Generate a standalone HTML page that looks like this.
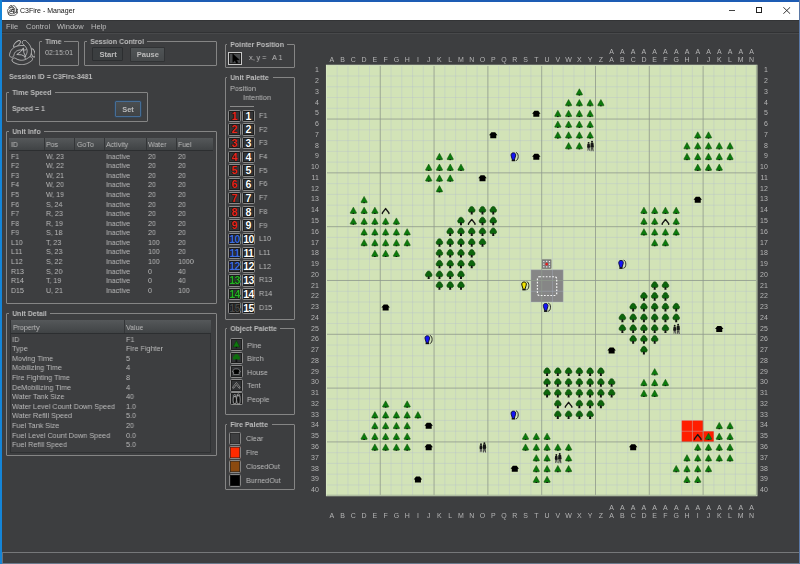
<!DOCTYPE html>
<html><head><meta charset="utf-8">
<style>
html,body{margin:0;padding:0;}
body{width:800px;height:564px;overflow:hidden;position:relative;background:#3d3e40;font-family:"Liberation Sans", sans-serif;color:#bbbbbb;}
.abs{position:absolute}
.box{position:absolute;border:1px solid #858585;border-radius:1px;box-sizing:border-box;}
.btitle{position:absolute;background:#3d3e40;padding:0 3.6px 0 3.4px;font-weight:bold;font-size:7.55px;line-height:9px;color:#bcbcbc;white-space:nowrap;transform:scaleX(0.93);transform-origin:0 0}
.t{position:absolute;font-size:7.6px;line-height:8.5px;white-space:nowrap;color:#bbbbbb;transform:scaleX(0.921);transform-origin:0 0}
.b{font-weight:bold}
.thead{position:absolute;box-sizing:border-box;background:linear-gradient(#55585a,#404345);border-bottom:1px solid #2c2e30}
.tsep{position:absolute;width:1px;background:#343638}
.tframe{position:absolute;border:1px solid #2f3133;box-sizing:border-box}
.ucell{position:absolute;width:12.8px;height:12.5px;box-sizing:border-box;border:1px solid #8a8a8a;border-radius:1.5px;box-shadow:inset 0 0 0 1px #1d1d1d;background:#333537;font-weight:bold;font-size:10.6px;line-height:10.6px;text-align:center;text-shadow:0 0 1px #000,0 0 0.6px #000,0 0 0.6px #000}
.ocell{position:absolute;width:12.8px;height:12.7px;box-sizing:border-box;border:1px solid #8a8a8a;border-radius:1.5px;box-shadow:inset 0 0 0 1px #1d1d1d;background:#303234}
.fcell{position:absolute;width:12.8px;height:12.4px;box-sizing:border-box;border:1px solid #858585;border-radius:1.5px;box-shadow:inset 0 0 0 0.6px #222}
.btn{position:absolute;box-sizing:border-box;border-radius:1px;font-weight:bold;font-size:7px;text-align:center;color:#bbbbbb}
.t,.btitle,.abs,.btn,svg{will-change:transform}
</style></head><body>
<!-- window frame -->
<div class="abs" style="left:0;top:0;width:800px;height:2px;background:#1d5cb4"></div>
<div class="abs" style="left:0;top:0;width:2px;height:564px;background:#1485d8"></div>
<div class="abs" style="left:799px;top:0;width:1px;height:564px;background:#5a78a6"></div>
<div class="abs" style="left:2px;top:2px;width:797px;height:18px;background:#ffffff"></div>
<svg class="abs" style="left:6.5px;top:4.5px" width="11" height="11" viewBox="-13 -13 26 26"><ellipse cx="-5.00" cy="-8.60" rx="4.30" ry="1.95" transform="rotate(-45 -5.00 -8.60)" fill="#fff" stroke="#111" stroke-width="1.7"/><ellipse cx="11.00" cy="0.40" rx="4.30" ry="1.85" transform="rotate(72 11.00 0.40)" fill="#fff" stroke="#111" stroke-width="1.7"/><ellipse cx="-5.60" cy="8.80" rx="4.30" ry="1.95" transform="rotate(22 -5.60 8.80)" fill="#fff" stroke="#111" stroke-width="1.7"/><path d="M-8.11,2.92 L-8.00,2.37 L-7.87,1.85 L-7.71,1.38 L-7.53,0.95 L-7.33,0.55 L-7.11,0.18 L-6.86,-0.16 L-6.60,-0.47 L-6.31,-0.76 L-5.99,-1.03 L-5.64,-1.28 L-5.26,-1.51 L-4.84,-1.72 L-4.38,-1.91 L-3.89,-2.08 L-3.35,-2.23 L-2.76,-2.36 L-2.14,-2.46 L-1.47,-2.53 L-0.75,-2.58 L0.00,-2.59 L0.80,-2.58 L1.64,-2.54 L2.53,-2.46 L3.10,-2.48 L3.65,-2.65 L4.14,-2.95 L4.53,-3.37 L4.80,-3.87 L4.93,-4.43 L4.92,-5.01 L4.75,-5.56 L4.45,-6.04 L4.03,-6.44 L3.52,-6.71 L2.96,-6.84 L1.94,-6.93 L0.95,-6.98 L-0.01,-6.99 L-0.94,-6.97 L-1.85,-6.91 L-2.72,-6.82 L-3.57,-6.68 L-4.39,-6.50 L-5.19,-6.28 L-5.95,-6.02 L-6.69,-5.71 L-7.39,-5.35 L-8.06,-4.95 L-8.69,-4.50 L-9.28,-4.00 L-9.83,-3.46 L-10.33,-2.87 L-10.78,-2.24 L-11.18,-1.58 L-11.53,-0.88 L-11.83,-0.15 L-12.08,0.60 L-12.29,1.39 L-12.45,2.20 L-12.47,2.77 L-12.34,3.33 L-12.07,3.84 L-11.68,4.26 L-11.19,4.56 L-10.64,4.73 L-10.07,4.75 L-9.51,4.62 L-9.00,4.35 L-8.58,3.96 L-8.28,3.47 Z" fill="#fff" stroke="#111" stroke-width="1.7"/><path d="M1.08,-8.33 L1.67,-7.80 L2.21,-7.28 L2.70,-6.76 L3.14,-6.25 L3.54,-5.75 L3.88,-5.25 L4.18,-4.76 L4.44,-4.28 L4.65,-3.80 L4.82,-3.34 L4.96,-2.88 L5.05,-2.42 L5.11,-1.96 L5.14,-1.50 L5.13,-1.04 L5.09,-0.57 L5.00,-0.10 L4.88,0.39 L4.73,0.90 L4.52,1.41 L4.28,1.94 L3.99,2.49 L3.66,3.04 L3.27,3.62 L3.01,4.12 L2.88,4.68 L2.90,5.26 L3.07,5.81 L3.38,6.29 L3.80,6.68 L4.31,6.95 L4.87,7.07 L5.44,7.05 L5.99,6.88 L6.48,6.57 L6.87,6.15 L7.37,5.41 L7.82,4.66 L8.22,3.90 L8.57,3.13 L8.87,2.36 L9.12,1.58 L9.31,0.80 L9.45,0.01 L9.52,-0.79 L9.54,-1.58 L9.49,-2.38 L9.39,-3.16 L9.22,-3.94 L9.00,-4.71 L8.72,-5.47 L8.39,-6.21 L8.00,-6.94 L7.57,-7.66 L7.08,-8.36 L6.54,-9.04 L5.96,-9.72 L5.33,-10.38 L4.66,-11.03 L3.94,-11.67 L3.46,-11.98 L2.92,-12.16 L2.34,-12.19 L1.78,-12.08 L1.27,-11.82 L0.84,-11.43 L0.53,-10.95 L0.35,-10.40 L0.32,-9.83 L0.44,-9.27 L0.70,-8.76 Z" fill="#fff" stroke="#111" stroke-width="1.7"/><path d="M6.96,4.79 L6.37,5.24 L5.78,5.65 L5.20,6.03 L4.62,6.36 L4.05,6.66 L3.49,6.92 L2.93,7.14 L2.38,7.33 L1.83,7.48 L1.28,7.61 L0.74,7.69 L0.20,7.75 L-0.34,7.77 L-0.88,7.76 L-1.42,7.72 L-1.97,7.65 L-2.52,7.54 L-3.07,7.40 L-3.63,7.23 L-4.20,7.02 L-4.78,6.77 L-5.36,6.49 L-5.95,6.17 L-6.55,5.81 L-7.07,5.57 L-7.64,5.48 L-8.21,5.53 L-8.75,5.73 L-9.22,6.06 L-9.58,6.50 L-9.82,7.03 L-9.92,7.59 L-9.87,8.16 L-9.67,8.70 L-9.33,9.17 L-8.89,9.54 L-8.13,9.99 L-7.37,10.41 L-6.60,10.78 L-5.83,11.11 L-5.05,11.40 L-4.26,11.64 L-3.47,11.84 L-2.68,11.99 L-1.88,12.10 L-1.08,12.16 L-0.28,12.17 L0.52,12.14 L1.32,12.05 L2.11,11.93 L2.90,11.75 L3.68,11.53 L4.46,11.27 L5.23,10.96 L5.99,10.61 L6.75,10.21 L7.49,9.78 L8.23,9.30 L8.97,8.79 L9.69,8.23 L10.09,7.82 L10.37,7.32 L10.51,6.76 L10.50,6.19 L10.34,5.64 L10.05,5.14 L9.64,4.74 L9.13,4.47 L8.58,4.33 L8.00,4.34 L7.45,4.49 Z" fill="#fff" stroke="#111" stroke-width="1.7"/><path d="M1.40,-4.62 Q1.04,0.20 3.82,4.42 Q-0.28,1.52 -5.22,2.00 Q-0.76,-0.28 1.40,-4.62 Z" fill="none" stroke="#111" stroke-width="1.7"/></svg>
<div class="abs" style="left:19.5px;top:6px;font-size:7px;line-height:9px;color:#111">C3Fire - Manager</div>
<div class="abs" style="left:728.5px;top:10px;width:6.3px;height:0.8px;background:#444"></div>
<div class="abs" style="left:755.5px;top:7.2px;width:6.3px;height:6.3px;border:0.9px solid #222;box-sizing:border-box"></div>
<svg class="abs" style="left:782.5px;top:7px" width="7.5" height="7" viewBox="0 0 7.5 7"><path d="M0.3,0.2 L7.2,6.8 M7.2,0.2 L0.3,6.8" stroke="#222" stroke-width="0.9"/></svg>
<!-- menu -->
<div class="abs" style="left:2px;top:20px;width:797px;height:13px;background:#3d3e40"></div>
<div class="abs" style="left:2px;top:20px;width:797px;height:1px;background:#333436"></div><div class="abs" style="left:2px;top:32px;width:797px;height:1px;background:#313234"></div><div class="abs" style="left:2px;top:33px;width:797px;height:1px;background:#48494b"></div>
<div class="abs" style="left:5.6px;top:21.6px;font-size:7.5px;line-height:9px;color:#bbbbbb">File</div>
<div class="abs" style="left:25.5px;top:21.6px;font-size:7.5px;line-height:9px;color:#bbbbbb">Control</div>
<div class="abs" style="left:57.4px;top:21.6px;font-size:7.5px;line-height:9px;color:#bbbbbb">Window</div>
<div class="abs" style="left:91px;top:21.6px;font-size:7.5px;line-height:9px;color:#bbbbbb">Help</div>
<!-- logo -->
<svg class="abs" style="left:9px;top:40px" width="26" height="25" viewBox="-13 -12.5 26 25"><ellipse cx="-5.00" cy="-8.60" rx="4.30" ry="1.95" transform="rotate(-45 -5.00 -8.60)" fill="#3d3e40" stroke="#b8b8b8" stroke-width="0.95"/><ellipse cx="11.00" cy="0.40" rx="4.30" ry="1.85" transform="rotate(72 11.00 0.40)" fill="#3d3e40" stroke="#b8b8b8" stroke-width="0.95"/><ellipse cx="-5.60" cy="8.80" rx="4.30" ry="1.95" transform="rotate(22 -5.60 8.80)" fill="#3d3e40" stroke="#b8b8b8" stroke-width="0.95"/><path d="M-8.11,2.92 L-8.00,2.37 L-7.87,1.85 L-7.71,1.38 L-7.53,0.95 L-7.33,0.55 L-7.11,0.18 L-6.86,-0.16 L-6.60,-0.47 L-6.31,-0.76 L-5.99,-1.03 L-5.64,-1.28 L-5.26,-1.51 L-4.84,-1.72 L-4.38,-1.91 L-3.89,-2.08 L-3.35,-2.23 L-2.76,-2.36 L-2.14,-2.46 L-1.47,-2.53 L-0.75,-2.58 L0.00,-2.59 L0.80,-2.58 L1.64,-2.54 L2.53,-2.46 L3.10,-2.48 L3.65,-2.65 L4.14,-2.95 L4.53,-3.37 L4.80,-3.87 L4.93,-4.43 L4.92,-5.01 L4.75,-5.56 L4.45,-6.04 L4.03,-6.44 L3.52,-6.71 L2.96,-6.84 L1.94,-6.93 L0.95,-6.98 L-0.01,-6.99 L-0.94,-6.97 L-1.85,-6.91 L-2.72,-6.82 L-3.57,-6.68 L-4.39,-6.50 L-5.19,-6.28 L-5.95,-6.02 L-6.69,-5.71 L-7.39,-5.35 L-8.06,-4.95 L-8.69,-4.50 L-9.28,-4.00 L-9.83,-3.46 L-10.33,-2.87 L-10.78,-2.24 L-11.18,-1.58 L-11.53,-0.88 L-11.83,-0.15 L-12.08,0.60 L-12.29,1.39 L-12.45,2.20 L-12.47,2.77 L-12.34,3.33 L-12.07,3.84 L-11.68,4.26 L-11.19,4.56 L-10.64,4.73 L-10.07,4.75 L-9.51,4.62 L-9.00,4.35 L-8.58,3.96 L-8.28,3.47 Z" fill="#3d3e40" stroke="#b8b8b8" stroke-width="0.95"/><path d="M1.08,-8.33 L1.67,-7.80 L2.21,-7.28 L2.70,-6.76 L3.14,-6.25 L3.54,-5.75 L3.88,-5.25 L4.18,-4.76 L4.44,-4.28 L4.65,-3.80 L4.82,-3.34 L4.96,-2.88 L5.05,-2.42 L5.11,-1.96 L5.14,-1.50 L5.13,-1.04 L5.09,-0.57 L5.00,-0.10 L4.88,0.39 L4.73,0.90 L4.52,1.41 L4.28,1.94 L3.99,2.49 L3.66,3.04 L3.27,3.62 L3.01,4.12 L2.88,4.68 L2.90,5.26 L3.07,5.81 L3.38,6.29 L3.80,6.68 L4.31,6.95 L4.87,7.07 L5.44,7.05 L5.99,6.88 L6.48,6.57 L6.87,6.15 L7.37,5.41 L7.82,4.66 L8.22,3.90 L8.57,3.13 L8.87,2.36 L9.12,1.58 L9.31,0.80 L9.45,0.01 L9.52,-0.79 L9.54,-1.58 L9.49,-2.38 L9.39,-3.16 L9.22,-3.94 L9.00,-4.71 L8.72,-5.47 L8.39,-6.21 L8.00,-6.94 L7.57,-7.66 L7.08,-8.36 L6.54,-9.04 L5.96,-9.72 L5.33,-10.38 L4.66,-11.03 L3.94,-11.67 L3.46,-11.98 L2.92,-12.16 L2.34,-12.19 L1.78,-12.08 L1.27,-11.82 L0.84,-11.43 L0.53,-10.95 L0.35,-10.40 L0.32,-9.83 L0.44,-9.27 L0.70,-8.76 Z" fill="#3d3e40" stroke="#b8b8b8" stroke-width="0.95"/><path d="M6.96,4.79 L6.37,5.24 L5.78,5.65 L5.20,6.03 L4.62,6.36 L4.05,6.66 L3.49,6.92 L2.93,7.14 L2.38,7.33 L1.83,7.48 L1.28,7.61 L0.74,7.69 L0.20,7.75 L-0.34,7.77 L-0.88,7.76 L-1.42,7.72 L-1.97,7.65 L-2.52,7.54 L-3.07,7.40 L-3.63,7.23 L-4.20,7.02 L-4.78,6.77 L-5.36,6.49 L-5.95,6.17 L-6.55,5.81 L-7.07,5.57 L-7.64,5.48 L-8.21,5.53 L-8.75,5.73 L-9.22,6.06 L-9.58,6.50 L-9.82,7.03 L-9.92,7.59 L-9.87,8.16 L-9.67,8.70 L-9.33,9.17 L-8.89,9.54 L-8.13,9.99 L-7.37,10.41 L-6.60,10.78 L-5.83,11.11 L-5.05,11.40 L-4.26,11.64 L-3.47,11.84 L-2.68,11.99 L-1.88,12.10 L-1.08,12.16 L-0.28,12.17 L0.52,12.14 L1.32,12.05 L2.11,11.93 L2.90,11.75 L3.68,11.53 L4.46,11.27 L5.23,10.96 L5.99,10.61 L6.75,10.21 L7.49,9.78 L8.23,9.30 L8.97,8.79 L9.69,8.23 L10.09,7.82 L10.37,7.32 L10.51,6.76 L10.50,6.19 L10.34,5.64 L10.05,5.14 L9.64,4.74 L9.13,4.47 L8.58,4.33 L8.00,4.34 L7.45,4.49 Z" fill="#3d3e40" stroke="#b8b8b8" stroke-width="0.95"/><path d="M1.40,-4.62 Q1.04,0.20 3.82,4.42 Q-0.28,1.52 -5.22,2.00 Q-0.76,-0.28 1.40,-4.62 Z" fill="none" stroke="#b8b8b8" stroke-width="0.95"/></svg>
<!-- time -->
<div class="box" style="left:39.00px;top:41.00px;width:40.10px;height:25.10px"></div><div class="btitle" style="left:42.24px;top:37.00px">Time</div>
<div class="t" style="left:45px;top:49.4px;font-size:7.81px">02:15:01</div>
<div class="box" style="left:84.00px;top:41.00px;width:133.40px;height:25.10px"></div><div class="btitle" style="left:87.34px;top:37.00px">Session Control</div>
<div class="btn" style="left:92px;top:47.2px;width:30.8px;height:14.4px;border:1px solid #2c2e30;background:#3b3e40;line-height:14.4px;font-size:7.6px;text-indent:1.5px">Start</div>
<div class="btn" style="left:130px;top:47px;width:35.2px;height:14.9px;border:1px solid #313335;background:linear-gradient(#505456,#46494b);line-height:14px;font-size:7.6px;text-indent:0.5px">Pause</div>
<div class="t b" style="left:9px;top:72.5px">Session ID = C3Fire-3481</div>
<div class="box" style="left:6.10px;top:91.90px;width:142.00px;height:30.20px"></div><div class="btitle" style="left:8.84px;top:87.90px">Time Speed</div>
<div class="t b" style="left:12px;top:105.2px">Speed = 1</div>
<div class="btn" style="left:115.4px;top:101px;width:26.2px;height:16px;border:1px solid #466d96;background:linear-gradient(#4a4e50,#404345);line-height:15px;font-size:7.4px;box-shadow:0 0 0 0.6px #2d4a66">Set</div>
<div class="box" style="left:5.50px;top:130.50px;width:211.00px;height:173.50px"></div><div class="btitle" style="left:8.84px;top:126.50px">Unit Info</div>
<div class="thead" style="left:9px;top:137.5px;width:204px;height:13.8px"></div>
<div class="tsep" style="left:44px;top:137.5px;height:12.8px"></div>
<div class="tsep" style="left:73.7px;top:137.5px;height:12.8px"></div>
<div class="tsep" style="left:104px;top:137.5px;height:12.8px"></div>
<div class="tsep" style="left:145.8px;top:137.5px;height:12.8px"></div>
<div class="tsep" style="left:176px;top:137.5px;height:12.8px"></div>
<div class="t" style="left:11px;top:141px">ID</div>
<div class="t" style="left:46.2px;top:141px">Pos</div>
<div class="t" style="left:76.5px;top:141px">GoTo</div>
<div class="t" style="left:106px;top:141px">Activity</div>
<div class="t" style="left:148px;top:141px">Water</div>
<div class="t" style="left:178px;top:141px">Fuel</div>
<div class="t" style="left:11px;top:152.80px">F1</div>
<div class="t" style="left:46.2px;top:152.80px">W, 23</div>
<div class="t" style="left:106px;top:152.80px">Inactive</div>
<div class="t" style="left:148px;top:152.80px">20</div>
<div class="t" style="left:178px;top:152.80px">20</div>
<div class="t" style="left:11px;top:162.36px">F2</div>
<div class="t" style="left:46.2px;top:162.36px">W, 22</div>
<div class="t" style="left:106px;top:162.36px">Inactive</div>
<div class="t" style="left:148px;top:162.36px">20</div>
<div class="t" style="left:178px;top:162.36px">20</div>
<div class="t" style="left:11px;top:171.92px">F3</div>
<div class="t" style="left:46.2px;top:171.92px">W, 21</div>
<div class="t" style="left:106px;top:171.92px">Inactive</div>
<div class="t" style="left:148px;top:171.92px">20</div>
<div class="t" style="left:178px;top:171.92px">20</div>
<div class="t" style="left:11px;top:181.48px">F4</div>
<div class="t" style="left:46.2px;top:181.48px">W, 20</div>
<div class="t" style="left:106px;top:181.48px">Inactive</div>
<div class="t" style="left:148px;top:181.48px">20</div>
<div class="t" style="left:178px;top:181.48px">20</div>
<div class="t" style="left:11px;top:191.04px">F5</div>
<div class="t" style="left:46.2px;top:191.04px">W, 19</div>
<div class="t" style="left:106px;top:191.04px">Inactive</div>
<div class="t" style="left:148px;top:191.04px">20</div>
<div class="t" style="left:178px;top:191.04px">20</div>
<div class="t" style="left:11px;top:200.60px">F6</div>
<div class="t" style="left:46.2px;top:200.60px">S, 24</div>
<div class="t" style="left:106px;top:200.60px">Inactive</div>
<div class="t" style="left:148px;top:200.60px">20</div>
<div class="t" style="left:178px;top:200.60px">20</div>
<div class="t" style="left:11px;top:210.16px">F7</div>
<div class="t" style="left:46.2px;top:210.16px">R, 23</div>
<div class="t" style="left:106px;top:210.16px">Inactive</div>
<div class="t" style="left:148px;top:210.16px">20</div>
<div class="t" style="left:178px;top:210.16px">20</div>
<div class="t" style="left:11px;top:219.72px">F8</div>
<div class="t" style="left:46.2px;top:219.72px">R, 19</div>
<div class="t" style="left:106px;top:219.72px">Inactive</div>
<div class="t" style="left:148px;top:219.72px">20</div>
<div class="t" style="left:178px;top:219.72px">20</div>
<div class="t" style="left:11px;top:229.28px">F9</div>
<div class="t" style="left:46.2px;top:229.28px">S, 18</div>
<div class="t" style="left:106px;top:229.28px">Inactive</div>
<div class="t" style="left:148px;top:229.28px">20</div>
<div class="t" style="left:178px;top:229.28px">20</div>
<div class="t" style="left:11px;top:238.84px">L10</div>
<div class="t" style="left:46.2px;top:238.84px">T, 23</div>
<div class="t" style="left:106px;top:238.84px">Inactive</div>
<div class="t" style="left:148px;top:238.84px">100</div>
<div class="t" style="left:178px;top:238.84px">20</div>
<div class="t" style="left:11px;top:248.40px">L11</div>
<div class="t" style="left:46.2px;top:248.40px">S, 23</div>
<div class="t" style="left:106px;top:248.40px">Inactive</div>
<div class="t" style="left:148px;top:248.40px">100</div>
<div class="t" style="left:178px;top:248.40px">20</div>
<div class="t" style="left:11px;top:257.96px">L12</div>
<div class="t" style="left:46.2px;top:257.96px">S, 22</div>
<div class="t" style="left:106px;top:257.96px">Inactive</div>
<div class="t" style="left:148px;top:257.96px">100</div>
<div class="t" style="left:178px;top:257.96px">1000</div>
<div class="t" style="left:11px;top:267.52px">R13</div>
<div class="t" style="left:46.2px;top:267.52px">S, 20</div>
<div class="t" style="left:106px;top:267.52px">Inactive</div>
<div class="t" style="left:148px;top:267.52px">0</div>
<div class="t" style="left:178px;top:267.52px">40</div>
<div class="t" style="left:11px;top:277.08px">R14</div>
<div class="t" style="left:46.2px;top:277.08px">T, 19</div>
<div class="t" style="left:106px;top:277.08px">Inactive</div>
<div class="t" style="left:148px;top:277.08px">0</div>
<div class="t" style="left:178px;top:277.08px">40</div>
<div class="t" style="left:11px;top:286.64px">D15</div>
<div class="t" style="left:46.2px;top:286.64px">U, 21</div>
<div class="t" style="left:106px;top:286.64px">Inactive</div>
<div class="t" style="left:148px;top:286.64px">0</div>
<div class="t" style="left:178px;top:286.64px">100</div>
<div class="box" style="left:6.00px;top:312.80px;width:211.00px;height:143.70px"></div><div class="btitle" style="left:8.84px;top:308.80px">Unit Detail</div>
<div class="tframe" style="left:10px;top:319.5px;width:201px;height:133px"></div>
<div class="thead" style="left:11px;top:320px;width:200px;height:14px"></div>
<div class="tsep" style="left:124.2px;top:320px;height:13px"></div>
<div class="t" style="left:12.7px;top:323.8px">Property</div>
<div class="t" style="left:126px;top:323.8px">Value</div>
<div class="t" style="left:11.8px;top:335.60px;font-size:7.87px">ID</div>
<div class="t" style="left:126px;top:335.60px;font-size:7.87px">F1</div>
<div class="t" style="left:11.8px;top:345.19px;font-size:7.87px">Type</div>
<div class="t" style="left:126px;top:345.19px;font-size:7.87px">Fire Fighter</div>
<div class="t" style="left:11.8px;top:354.78px;font-size:7.87px">Moving Time</div>
<div class="t" style="left:126px;top:354.78px;font-size:7.87px">5</div>
<div class="t" style="left:11.8px;top:364.37px;font-size:7.87px">Mobilizing Time</div>
<div class="t" style="left:126px;top:364.37px;font-size:7.87px">4</div>
<div class="t" style="left:11.8px;top:373.96px;font-size:7.87px">Fire Fighting Time</div>
<div class="t" style="left:126px;top:373.96px;font-size:7.87px">8</div>
<div class="t" style="left:11.8px;top:383.55px;font-size:7.87px">DeMobilizing Time</div>
<div class="t" style="left:126px;top:383.55px;font-size:7.87px">4</div>
<div class="t" style="left:11.8px;top:393.14px;font-size:7.87px">Water Tank Size</div>
<div class="t" style="left:126px;top:393.14px;font-size:7.87px">40</div>
<div class="t" style="left:11.8px;top:402.73px;font-size:7.87px">Water Level Count Down Speed</div>
<div class="t" style="left:126px;top:402.73px;font-size:7.87px">1.0</div>
<div class="t" style="left:11.8px;top:412.32px;font-size:7.87px">Water Refill Speed</div>
<div class="t" style="left:126px;top:412.32px;font-size:7.87px">5.0</div>
<div class="t" style="left:11.8px;top:421.91px;font-size:7.87px">Fuel Tank Size</div>
<div class="t" style="left:126px;top:421.91px;font-size:7.87px">20</div>
<div class="t" style="left:11.8px;top:431.50px;font-size:7.87px">Fuel Level Count Down Speed</div>
<div class="t" style="left:126px;top:431.50px;font-size:7.87px">0.0</div>
<div class="t" style="left:11.8px;top:441.09px;font-size:7.87px">Fuel Refill Speed</div>
<div class="t" style="left:126px;top:441.09px;font-size:7.87px">5.0</div>
<div class="box" style="left:224.70px;top:44.10px;width:70.30px;height:24.40px"></div><div class="btitle" style="left:227.44px;top:40.10px">Pointer Position</div>
<div style="position:absolute;left:228px;top:51.5px;width:13.5px;height:13.5px;box-sizing:border-box;border:1px solid #c8c8c8;box-shadow:inset 0 0 0 1px #222;background:#4a4c4e"></div>
<svg style="position:absolute;left:231px;top:53px" width="10" height="11" viewBox="0 0 10 11"><path d="M1.8,1 L1.8,9.4 L3.9,7.5 L5.5,10.2 L6.9,9.5 L5.4,6.9 L8.3,6.8 Z" fill="#000" stroke="#000" stroke-width="0.5" stroke-linejoin="round"/></svg>
<div class="t" style="left:249px;top:54.2px;font-size:7.81px">x, y =</div><div class="t" style="left:271.6px;top:54.2px;font-size:7.81px">A 1</div>
<div class="box" style="left:224.70px;top:77.00px;width:70.30px;height:242.50px"></div><div class="btitle" style="left:227.44px;top:73.00px">Unit Palette</div>
<div class="t" style="left:230px;top:84.8px;font-size:7.92px">Position</div>
<div class="t" style="left:243.4px;top:93.7px;font-size:7.92px">Intention</div>
<div style="position:absolute;left:230px;top:105.5px;width:24px;height:1px;background:#8a8a8a"></div>
<div class="ucell" style="left:228.1px;top:109.50px;color:#e8281e;letter-spacing:0">1</div>
<div class="ucell" style="left:242px;top:109.50px;color:#fff;letter-spacing:0">1</div>
<div class="t" style="left:258.8px;top:111.80px;font-size:7.81px">F1</div>
<div class="ucell" style="left:228.1px;top:123.22px;color:#e8281e;letter-spacing:0">2</div>
<div class="ucell" style="left:242px;top:123.22px;color:#fff;letter-spacing:0">2</div>
<div class="t" style="left:258.8px;top:125.52px;font-size:7.81px">F2</div>
<div class="ucell" style="left:228.1px;top:136.94px;color:#e8281e;letter-spacing:0">3</div>
<div class="ucell" style="left:242px;top:136.94px;color:#fff;letter-spacing:0">3</div>
<div class="t" style="left:258.8px;top:139.24px;font-size:7.81px">F3</div>
<div class="ucell" style="left:228.1px;top:150.66px;color:#e8281e;letter-spacing:0">4</div>
<div class="ucell" style="left:242px;top:150.66px;color:#fff;letter-spacing:0">4</div>
<div class="t" style="left:258.8px;top:152.96px;font-size:7.81px">F4</div>
<div class="ucell" style="left:228.1px;top:164.38px;color:#e8281e;letter-spacing:0">5</div>
<div class="ucell" style="left:242px;top:164.38px;color:#fff;letter-spacing:0">5</div>
<div class="t" style="left:258.8px;top:166.68px;font-size:7.81px">F5</div>
<div class="ucell" style="left:228.1px;top:178.10px;color:#e8281e;letter-spacing:0">6</div>
<div class="ucell" style="left:242px;top:178.10px;color:#fff;letter-spacing:0">6</div>
<div class="t" style="left:258.8px;top:180.40px;font-size:7.81px">F6</div>
<div class="ucell" style="left:228.1px;top:191.82px;color:#e8281e;letter-spacing:0">7</div>
<div class="ucell" style="left:242px;top:191.82px;color:#fff;letter-spacing:0">7</div>
<div class="t" style="left:258.8px;top:194.12px;font-size:7.81px">F7</div>
<div class="ucell" style="left:228.1px;top:205.54px;color:#e8281e;letter-spacing:0">8</div>
<div class="ucell" style="left:242px;top:205.54px;color:#fff;letter-spacing:0">8</div>
<div class="t" style="left:258.8px;top:207.84px;font-size:7.81px">F8</div>
<div class="ucell" style="left:228.1px;top:219.26px;color:#e8281e;letter-spacing:0">9</div>
<div class="ucell" style="left:242px;top:219.26px;color:#fff;letter-spacing:0">9</div>
<div class="t" style="left:258.8px;top:221.56px;font-size:7.81px">F9</div>
<div class="ucell" style="left:228.1px;top:232.98px;color:#3f6fe0;letter-spacing:-0.7px">10</div>
<div class="ucell" style="left:242px;top:232.98px;color:#fff;letter-spacing:-0.7px">10</div>
<div class="t" style="left:258.8px;top:235.28px;font-size:7.81px">L10</div>
<div class="ucell" style="left:228.1px;top:246.70px;color:#3f6fe0;letter-spacing:-0.7px">11</div>
<div class="ucell" style="left:242px;top:246.70px;color:#fff;letter-spacing:-0.7px">11</div>
<div class="t" style="left:258.8px;top:249.00px;font-size:7.81px">L11</div>
<div class="ucell" style="left:228.1px;top:260.42px;color:#3f6fe0;letter-spacing:-0.7px">12</div>
<div class="ucell" style="left:242px;top:260.42px;color:#fff;letter-spacing:-0.7px">12</div>
<div class="t" style="left:258.8px;top:262.72px;font-size:7.81px">L12</div>
<div class="ucell" style="left:228.1px;top:274.14px;color:#26b326;letter-spacing:-0.7px">13</div>
<div class="ucell" style="left:242px;top:274.14px;color:#fff;letter-spacing:-0.7px">13</div>
<div class="t" style="left:258.8px;top:276.44px;font-size:7.81px">R13</div>
<div class="ucell" style="left:228.1px;top:287.86px;color:#26b326;letter-spacing:-0.7px">14</div>
<div class="ucell" style="left:242px;top:287.86px;color:#fff;letter-spacing:-0.7px">14</div>
<div class="t" style="left:258.8px;top:290.16px;font-size:7.81px">R14</div>
<div class="ucell" style="left:228.1px;top:301.58px;color:#4a4a4a;letter-spacing:-0.7px">15</div>
<div class="ucell" style="left:242px;top:301.58px;color:#fff;letter-spacing:-0.7px">15</div>
<div class="t" style="left:258.8px;top:303.88px;font-size:7.81px">D15</div>
<div class="box" style="left:224.90px;top:328.10px;width:70.00px;height:87.20px"></div><div class="btitle" style="left:227.34px;top:324.10px">Object Palette</div>
<div class="ocell" style="left:230px;top:338.00px"></div>
<div class="t" style="left:247.1px;top:341.50px;font-size:7.81px">Pine</div>
<div class="ocell" style="left:230px;top:351.62px"></div>
<div class="t" style="left:247.1px;top:355.12px;font-size:7.81px">Birch</div>
<div class="ocell" style="left:230px;top:365.24px"></div>
<div class="t" style="left:247.1px;top:368.74px;font-size:7.81px">House</div>
<div class="ocell" style="left:230px;top:378.86px"></div>
<div class="t" style="left:247.1px;top:382.36px;font-size:7.81px">Tent</div>
<div class="ocell" style="left:230px;top:392.48px"></div>
<div class="t" style="left:247.1px;top:395.98px;font-size:7.81px">People</div>
<div class="box" style="left:224.90px;top:423.90px;width:70.00px;height:66.40px"></div><div class="btitle" style="left:227.34px;top:419.90px">Fire Palette</div>
<div class="fcell" style="left:228.6px;top:432.40px;background:#3d3e40"></div>
<div class="t" style="left:245.5px;top:434.70px;font-size:7.81px">Clear</div>
<div class="fcell" style="left:228.6px;top:446.35px;background:#ff2a00"></div>
<div class="t" style="left:245.5px;top:448.65px;font-size:7.81px">Fire</div>
<div class="fcell" style="left:228.6px;top:460.30px;background:#8b4a10"></div>
<div class="t" style="left:245.5px;top:462.60px;font-size:7.81px">ClosedOut</div>
<div class="fcell" style="left:228.6px;top:474.25px;background:#000000"></div>
<div class="t" style="left:245.5px;top:476.55px;font-size:7.81px">BurnedOut</div><svg style="position:absolute;left:0;top:0" width="800" height="564" viewBox="0 0 800 564">
<g transform="translate(236.4,344.35)"><path d="M0,-3.8 L-3.3,2.6 L3.3,2.6 Z" fill="#0e7a0e" stroke="#0a3a0a" stroke-width="0.6"/><rect x="-0.7" y="2.5" width="1.4" height="1.3" fill="#111"/></g>
<g transform="translate(236.4,357.97)"><path d="M0,-4 C1.6,-4 2.2,-2.8 2.3,-2 C3.4,-1.7 3.7,-0.5 3.5,0.5 C3.3,1.6 2.3,1.9 1.1,1.6 L-1.1,1.6 C-2.3,1.9 -3.3,1.6 -3.5,0.5 C-3.7,-0.5 -3.4,-1.7 -2.3,-2 C-2.2,-2.8 -1.6,-4 0,-4 Z" fill="#0d6e0d"/><rect x="-0.9" y="1.4" width="1.8" height="2.6" fill="#111"/></g>
<g transform="translate(236.4,371.59)"><path d="M-2,-2.6 L2,-2.6 L4.2,0.2 L2.8,0.2 L2.8,2.9 L-2.8,2.9 L-2.8,0.2 L-4.2,0.2 Z" fill="#000" stroke="#d8d8d8" stroke-width="0.45" stroke-linejoin="miter"/></g>
<g transform="translate(236.4,385.21)"><path d="M-3.6,2.9 L-3.6,1.8 L0,-2.7 L3.6,1.8 L3.6,2.9 L2.6,2.9 L0,-0.6 L-2.6,2.9 Z" fill="#222" stroke="#cfcfcf" stroke-width="0.55" stroke-linejoin="round"/></g>
<g transform="translate(236.4,398.83)"><g stroke="#e0e0e0" stroke-width="0.55" stroke-linejoin="round"><circle cx="-1.6" cy="-3.2" r="1" fill="#111"/><path d="M-3,-2.1 L-0.3,-2.1 L0,1.2 L-0.5,4.7 L-2.8,4.7 L-3.3,1.2 Z" fill="#111"/><circle cx="1.9" cy="-3.9" r="1.05" fill="#111"/><path d="M0.5,-2.9 L3.4,-2.9 L3.8,1 L3.4,4.9 L0.9,4.9 L0.2,1 Z" fill="#111"/></g></g>
</svg>
<svg width="800" height="564" viewBox="0 0 800 564" style="position:absolute;left:0;top:0">
<defs>
<g id="pine"><path d="M0,-3.4 L-3.1,2.2 Q-3.3,2.9 -2.4,2.9 L2.4,2.9 Q3.3,2.9 3.1,2.2 Z" fill="#0b7a0b" stroke="#0a4d0a" stroke-width="0.5"/><rect x="-0.8" y="2.4" width="1.6" height="1" fill="#111"/></g>
<g id="birch"><path d="M0,-4.1 C1.5,-4.1 2.1,-2.9 2.2,-2.1 C3.1,-1.8 3.4,-0.6 3.25,0.4 C3.05,1.5 2.2,1.8 1.1,1.6 L-1.1,1.6 C-2.2,1.8 -3.05,1.5 -3.25,0.4 C-3.4,-0.6 -3.1,-1.8 -2.2,-2.1 C-2.1,-2.9 -1.5,-4.1 0,-4.1 Z" fill="#0c650c" stroke="#083e08" stroke-width="0.6"/><path d="M-0.9,1.3 L0.9,1.3 L1.05,4 L-1.05,4 Z" fill="#111"/></g>
<g id="house"><path d="M-1.9,-3 L1.9,-3 L4.2,0 L3,0 L3,3 L-3,3 L-3,0 L-4.2,0 Z" fill="#000"/></g>
<g id="tent"><path d="M-3.3,2.5 L-3.1,1.7 L0,-2.3 L3.1,1.7 L3.3,2.5" fill="none" stroke="#151515" stroke-width="1.45" stroke-linejoin="round" stroke-linecap="round"/></g>
<g id="people"><circle cx="-1.5" cy="-3.1" r="0.95" fill="#111"/><path d="M-2.7,-2.1 L-0.4,-2.1 L-0.1,0.6 L-0.4,2 L-2.7,2 L-3,0.6 Z" fill="#151515"/><path d="M-2.6,1.8 L-2.7,4.9 L-1.9,4.9 L-1.5,2.9 L-1.0,4.9 L-0.2,4.9 L-0.4,1.8 Z" fill="#5a5a5a"/><circle cx="1.9" cy="-4.1" r="1.0" fill="#111"/><path d="M0.6,-3.1 L3.3,-3.1 L3.7,0.2 L3.3,1.7 L0.6,1.7 L0.3,0.2 Z" fill="#151515"/><path d="M0.7,1.5 L0.5,5.2 L1.4,5.2 L1.9,2.8 L2.6,5.2 L3.6,5.2 L3.2,1.5 Z" fill="#4a4a4a"/></g>
<g id="unitb"><path d="M0,-3.9 C2.1,-3.9 2.5,-2.4 2.2,-0.8 L0.9,3.4 L-0.9,3.4 L-2.2,-0.8 C-2.5,-2.4 -2.1,-3.9 0,-3.9 Z" fill="#1414f5" stroke="#0a0a30" stroke-width="0.9"/><rect x="-1.7" y="3.1" width="3.4" height="1.4" fill="#111"/><path d="M2.6,-4.2 C5.6,-3.9 5.6,3.6 2.4,3.9" fill="none" stroke="#1a1a1a" stroke-width="0.9"/></g>
<g id="unity"><path d="M0,-3.9 C2.1,-3.9 2.5,-2.4 2.2,-0.8 L0.9,3.4 L-0.9,3.4 L-2.2,-0.8 C-2.5,-2.4 -2.1,-3.9 0,-3.9 Z" fill="#f0e400" stroke="#1a1a00" stroke-width="1"/><rect x="-1.7" y="3.1" width="3.4" height="1.4" fill="#111"/><path d="M2.6,-4.2 C5.6,-3.9 5.6,3.6 2.4,3.9" fill="none" stroke="#1a1a1a" stroke-width="0.9"/></g>
</defs>
<rect x="326.45" y="65.25" width="430.48" height="430.48" fill="#d2e3b7"/>
<rect x="681.60" y="420.40" width="10.76" height="10.76" fill="#ff1e00"/>
<rect x="692.36" y="420.40" width="10.76" height="10.76" fill="#ff1e00"/>
<rect x="681.60" y="431.16" width="10.76" height="10.76" fill="#ff1e00"/>
<rect x="692.36" y="431.16" width="10.76" height="10.76" fill="#ff1e00"/>
<rect x="703.12" y="431.16" width="10.76" height="10.76" fill="#ff1e00"/>
<rect x="530.93" y="269.73" width="32.29" height="32.29" fill="#868686"/>
<line x1="337.21" y1="65.25" x2="337.21" y2="495.73" stroke="#b0bcd0" stroke-opacity="0.34" stroke-width="0.95"/>
<line x1="326.45" y1="76.01" x2="756.93" y2="76.01" stroke="#b0bcd0" stroke-opacity="0.34" stroke-width="0.95"/>
<line x1="347.97" y1="65.25" x2="347.97" y2="495.73" stroke="#b0bcd0" stroke-opacity="0.34" stroke-width="0.95"/>
<line x1="326.45" y1="86.77" x2="756.93" y2="86.77" stroke="#b0bcd0" stroke-opacity="0.34" stroke-width="0.95"/>
<line x1="358.74" y1="65.25" x2="358.74" y2="495.73" stroke="#b0bcd0" stroke-opacity="0.34" stroke-width="0.95"/>
<line x1="326.45" y1="97.54" x2="756.93" y2="97.54" stroke="#b0bcd0" stroke-opacity="0.34" stroke-width="0.95"/>
<line x1="369.50" y1="65.25" x2="369.50" y2="495.73" stroke="#b0bcd0" stroke-opacity="0.34" stroke-width="0.95"/>
<line x1="326.45" y1="108.30" x2="756.93" y2="108.30" stroke="#b0bcd0" stroke-opacity="0.34" stroke-width="0.95"/>
<line x1="391.02" y1="65.25" x2="391.02" y2="495.73" stroke="#b0bcd0" stroke-opacity="0.34" stroke-width="0.95"/>
<line x1="326.45" y1="129.82" x2="756.93" y2="129.82" stroke="#b0bcd0" stroke-opacity="0.34" stroke-width="0.95"/>
<line x1="401.78" y1="65.25" x2="401.78" y2="495.73" stroke="#b0bcd0" stroke-opacity="0.34" stroke-width="0.95"/>
<line x1="326.45" y1="140.58" x2="756.93" y2="140.58" stroke="#b0bcd0" stroke-opacity="0.34" stroke-width="0.95"/>
<line x1="412.55" y1="65.25" x2="412.55" y2="495.73" stroke="#b0bcd0" stroke-opacity="0.34" stroke-width="0.95"/>
<line x1="326.45" y1="151.35" x2="756.93" y2="151.35" stroke="#b0bcd0" stroke-opacity="0.34" stroke-width="0.95"/>
<line x1="423.31" y1="65.25" x2="423.31" y2="495.73" stroke="#b0bcd0" stroke-opacity="0.34" stroke-width="0.95"/>
<line x1="326.45" y1="162.11" x2="756.93" y2="162.11" stroke="#b0bcd0" stroke-opacity="0.34" stroke-width="0.95"/>
<line x1="444.83" y1="65.25" x2="444.83" y2="495.73" stroke="#b0bcd0" stroke-opacity="0.34" stroke-width="0.95"/>
<line x1="326.45" y1="183.63" x2="756.93" y2="183.63" stroke="#b0bcd0" stroke-opacity="0.34" stroke-width="0.95"/>
<line x1="455.59" y1="65.25" x2="455.59" y2="495.73" stroke="#b0bcd0" stroke-opacity="0.34" stroke-width="0.95"/>
<line x1="326.45" y1="194.39" x2="756.93" y2="194.39" stroke="#b0bcd0" stroke-opacity="0.34" stroke-width="0.95"/>
<line x1="466.36" y1="65.25" x2="466.36" y2="495.73" stroke="#b0bcd0" stroke-opacity="0.34" stroke-width="0.95"/>
<line x1="326.45" y1="205.16" x2="756.93" y2="205.16" stroke="#b0bcd0" stroke-opacity="0.34" stroke-width="0.95"/>
<line x1="477.12" y1="65.25" x2="477.12" y2="495.73" stroke="#b0bcd0" stroke-opacity="0.34" stroke-width="0.95"/>
<line x1="326.45" y1="215.92" x2="756.93" y2="215.92" stroke="#b0bcd0" stroke-opacity="0.34" stroke-width="0.95"/>
<line x1="498.64" y1="65.25" x2="498.64" y2="495.73" stroke="#b0bcd0" stroke-opacity="0.34" stroke-width="0.95"/>
<line x1="326.45" y1="237.44" x2="756.93" y2="237.44" stroke="#b0bcd0" stroke-opacity="0.34" stroke-width="0.95"/>
<line x1="509.40" y1="65.25" x2="509.40" y2="495.73" stroke="#b0bcd0" stroke-opacity="0.34" stroke-width="0.95"/>
<line x1="326.45" y1="248.20" x2="756.93" y2="248.20" stroke="#b0bcd0" stroke-opacity="0.34" stroke-width="0.95"/>
<line x1="520.17" y1="65.25" x2="520.17" y2="495.73" stroke="#b0bcd0" stroke-opacity="0.34" stroke-width="0.95"/>
<line x1="326.45" y1="258.97" x2="756.93" y2="258.97" stroke="#b0bcd0" stroke-opacity="0.34" stroke-width="0.95"/>
<line x1="530.93" y1="65.25" x2="530.93" y2="495.73" stroke="#b0bcd0" stroke-opacity="0.34" stroke-width="0.95"/>
<line x1="326.45" y1="269.73" x2="756.93" y2="269.73" stroke="#b0bcd0" stroke-opacity="0.34" stroke-width="0.95"/>
<line x1="552.45" y1="65.25" x2="552.45" y2="495.73" stroke="#b0bcd0" stroke-opacity="0.34" stroke-width="0.95"/>
<line x1="326.45" y1="291.25" x2="756.93" y2="291.25" stroke="#b0bcd0" stroke-opacity="0.34" stroke-width="0.95"/>
<line x1="563.21" y1="65.25" x2="563.21" y2="495.73" stroke="#b0bcd0" stroke-opacity="0.34" stroke-width="0.95"/>
<line x1="326.45" y1="302.01" x2="756.93" y2="302.01" stroke="#b0bcd0" stroke-opacity="0.34" stroke-width="0.95"/>
<line x1="573.98" y1="65.25" x2="573.98" y2="495.73" stroke="#b0bcd0" stroke-opacity="0.34" stroke-width="0.95"/>
<line x1="326.45" y1="312.78" x2="756.93" y2="312.78" stroke="#b0bcd0" stroke-opacity="0.34" stroke-width="0.95"/>
<line x1="584.74" y1="65.25" x2="584.74" y2="495.73" stroke="#b0bcd0" stroke-opacity="0.34" stroke-width="0.95"/>
<line x1="326.45" y1="323.54" x2="756.93" y2="323.54" stroke="#b0bcd0" stroke-opacity="0.34" stroke-width="0.95"/>
<line x1="606.26" y1="65.25" x2="606.26" y2="495.73" stroke="#b0bcd0" stroke-opacity="0.34" stroke-width="0.95"/>
<line x1="326.45" y1="345.06" x2="756.93" y2="345.06" stroke="#b0bcd0" stroke-opacity="0.34" stroke-width="0.95"/>
<line x1="617.02" y1="65.25" x2="617.02" y2="495.73" stroke="#b0bcd0" stroke-opacity="0.34" stroke-width="0.95"/>
<line x1="326.45" y1="355.82" x2="756.93" y2="355.82" stroke="#b0bcd0" stroke-opacity="0.34" stroke-width="0.95"/>
<line x1="627.79" y1="65.25" x2="627.79" y2="495.73" stroke="#b0bcd0" stroke-opacity="0.34" stroke-width="0.95"/>
<line x1="326.45" y1="366.59" x2="756.93" y2="366.59" stroke="#b0bcd0" stroke-opacity="0.34" stroke-width="0.95"/>
<line x1="638.55" y1="65.25" x2="638.55" y2="495.73" stroke="#b0bcd0" stroke-opacity="0.34" stroke-width="0.95"/>
<line x1="326.45" y1="377.35" x2="756.93" y2="377.35" stroke="#b0bcd0" stroke-opacity="0.34" stroke-width="0.95"/>
<line x1="660.07" y1="65.25" x2="660.07" y2="495.73" stroke="#b0bcd0" stroke-opacity="0.34" stroke-width="0.95"/>
<line x1="326.45" y1="398.87" x2="756.93" y2="398.87" stroke="#b0bcd0" stroke-opacity="0.34" stroke-width="0.95"/>
<line x1="670.83" y1="65.25" x2="670.83" y2="495.73" stroke="#b0bcd0" stroke-opacity="0.34" stroke-width="0.95"/>
<line x1="326.45" y1="409.63" x2="756.93" y2="409.63" stroke="#b0bcd0" stroke-opacity="0.34" stroke-width="0.95"/>
<line x1="681.60" y1="65.25" x2="681.60" y2="495.73" stroke="#b0bcd0" stroke-opacity="0.34" stroke-width="0.95"/>
<line x1="326.45" y1="420.40" x2="756.93" y2="420.40" stroke="#b0bcd0" stroke-opacity="0.34" stroke-width="0.95"/>
<line x1="692.36" y1="65.25" x2="692.36" y2="495.73" stroke="#b0bcd0" stroke-opacity="0.34" stroke-width="0.95"/>
<line x1="326.45" y1="431.16" x2="756.93" y2="431.16" stroke="#b0bcd0" stroke-opacity="0.34" stroke-width="0.95"/>
<line x1="713.88" y1="65.25" x2="713.88" y2="495.73" stroke="#b0bcd0" stroke-opacity="0.34" stroke-width="0.95"/>
<line x1="326.45" y1="452.68" x2="756.93" y2="452.68" stroke="#b0bcd0" stroke-opacity="0.34" stroke-width="0.95"/>
<line x1="724.64" y1="65.25" x2="724.64" y2="495.73" stroke="#b0bcd0" stroke-opacity="0.34" stroke-width="0.95"/>
<line x1="326.45" y1="463.44" x2="756.93" y2="463.44" stroke="#b0bcd0" stroke-opacity="0.34" stroke-width="0.95"/>
<line x1="735.41" y1="65.25" x2="735.41" y2="495.73" stroke="#b0bcd0" stroke-opacity="0.34" stroke-width="0.95"/>
<line x1="326.45" y1="474.21" x2="756.93" y2="474.21" stroke="#b0bcd0" stroke-opacity="0.34" stroke-width="0.95"/>
<line x1="746.17" y1="65.25" x2="746.17" y2="495.73" stroke="#b0bcd0" stroke-opacity="0.34" stroke-width="0.95"/>
<line x1="326.45" y1="484.97" x2="756.93" y2="484.97" stroke="#b0bcd0" stroke-opacity="0.34" stroke-width="0.95"/>
<line x1="380.26" y1="65.25" x2="380.26" y2="495.73" stroke="#8e988c" stroke-width="0.8"/>
<line x1="326.45" y1="119.06" x2="756.93" y2="119.06" stroke="#8e988c" stroke-width="0.8"/>
<line x1="434.07" y1="65.25" x2="434.07" y2="495.73" stroke="#8e988c" stroke-width="0.8"/>
<line x1="326.45" y1="172.87" x2="756.93" y2="172.87" stroke="#8e988c" stroke-width="0.8"/>
<line x1="487.88" y1="65.25" x2="487.88" y2="495.73" stroke="#8e988c" stroke-width="0.8"/>
<line x1="326.45" y1="226.68" x2="756.93" y2="226.68" stroke="#8e988c" stroke-width="0.8"/>
<line x1="541.69" y1="65.25" x2="541.69" y2="495.73" stroke="#8e988c" stroke-width="0.8"/>
<line x1="326.45" y1="280.49" x2="756.93" y2="280.49" stroke="#8e988c" stroke-width="0.8"/>
<line x1="595.50" y1="65.25" x2="595.50" y2="495.73" stroke="#8e988c" stroke-width="0.8"/>
<line x1="326.45" y1="334.30" x2="756.93" y2="334.30" stroke="#8e988c" stroke-width="0.8"/>
<line x1="649.31" y1="65.25" x2="649.31" y2="495.73" stroke="#8e988c" stroke-width="0.8"/>
<line x1="326.45" y1="388.11" x2="756.93" y2="388.11" stroke="#8e988c" stroke-width="0.8"/>
<line x1="703.12" y1="65.25" x2="703.12" y2="495.73" stroke="#8e988c" stroke-width="0.8"/>
<line x1="326.45" y1="441.92" x2="756.93" y2="441.92" stroke="#8e988c" stroke-width="0.8"/>
<rect x="326.45" y="65.25" width="430.48" height="430.48" fill="none" stroke="#dcebc6" stroke-width="1"/>
<path d="M756.43,65.25 L756.43,495.23 L326.45,495.23" fill="none" stroke="#a2b098" stroke-width="1"/>
<rect x="537.43" y="276.73" width="19.29" height="18.79" rx="2" fill="none" stroke="#f4f4f4" stroke-width="1.2" stroke-dasharray="1.7,1.5"/>
<rect x="542.29" y="259.77" width="8.8" height="8.8" fill="#7d7d7d" stroke="#666" stroke-width="0.5"/>
<rect x="543.19" y="260.97" width="1.2" height="1.2" fill="#eee"/>
<rect x="546.09" y="260.77" width="1.2" height="1.2" fill="#eee"/>
<rect x="548.89" y="260.97" width="1.2" height="1.2" fill="#eee"/>
<rect x="543.19" y="263.57" width="1.2" height="1.2" fill="#eee"/>
<rect x="548.89" y="263.57" width="1.2" height="1.2" fill="#eee"/>
<rect x="543.19" y="266.17" width="1.2" height="1.2" fill="#eee"/>
<rect x="546.09" y="266.27" width="1.2" height="1.2" fill="#eee"/>
<rect x="548.89" y="266.17" width="1.2" height="1.2" fill="#eee"/>
<circle cx="546.69" cy="264.17" r="1.3" fill="#e02020"/>
<use href="#pine" x="439.45" y="156.73"/>
<use href="#pine" x="450.21" y="156.73"/>
<use href="#pine" x="686.98" y="156.73"/>
<use href="#pine" x="697.74" y="156.73"/>
<use href="#pine" x="708.50" y="156.73"/>
<use href="#pine" x="719.26" y="156.73"/>
<use href="#pine" x="730.03" y="156.73"/>
<use href="#pine" x="428.69" y="167.49"/>
<use href="#pine" x="439.45" y="167.49"/>
<use href="#pine" x="450.21" y="167.49"/>
<use href="#pine" x="460.98" y="167.49"/>
<use href="#pine" x="697.74" y="167.49"/>
<use href="#pine" x="708.50" y="167.49"/>
<use href="#pine" x="719.26" y="167.49"/>
<use href="#pine" x="428.69" y="178.25"/>
<use href="#pine" x="439.45" y="178.25"/>
<use href="#pine" x="450.21" y="178.25"/>
<use href="#pine" x="439.45" y="189.01"/>
<use href="#pine" x="579.36" y="92.16"/>
<use href="#pine" x="568.60" y="102.92"/>
<use href="#pine" x="579.36" y="102.92"/>
<use href="#pine" x="590.12" y="102.92"/>
<use href="#pine" x="600.88" y="102.92"/>
<use href="#pine" x="557.83" y="113.68"/>
<use href="#pine" x="568.60" y="113.68"/>
<use href="#pine" x="579.36" y="113.68"/>
<use href="#pine" x="590.12" y="113.68"/>
<use href="#pine" x="557.83" y="124.44"/>
<use href="#pine" x="568.60" y="124.44"/>
<use href="#pine" x="579.36" y="124.44"/>
<use href="#pine" x="590.12" y="124.44"/>
<use href="#pine" x="557.83" y="135.20"/>
<use href="#pine" x="568.60" y="135.20"/>
<use href="#pine" x="579.36" y="135.20"/>
<use href="#pine" x="590.12" y="135.20"/>
<use href="#pine" x="697.74" y="135.20"/>
<use href="#pine" x="708.50" y="135.20"/>
<use href="#pine" x="568.60" y="145.97"/>
<use href="#pine" x="579.36" y="145.97"/>
<use href="#pine" x="686.98" y="145.97"/>
<use href="#pine" x="697.74" y="145.97"/>
<use href="#pine" x="708.50" y="145.97"/>
<use href="#pine" x="719.26" y="145.97"/>
<use href="#pine" x="730.03" y="145.97"/>
<use href="#pine" x="364.12" y="199.78"/>
<use href="#pine" x="353.36" y="210.54"/>
<use href="#pine" x="364.12" y="210.54"/>
<use href="#pine" x="374.88" y="210.54"/>
<use href="#pine" x="643.93" y="210.54"/>
<use href="#pine" x="654.69" y="210.54"/>
<use href="#pine" x="665.45" y="210.54"/>
<use href="#pine" x="676.21" y="210.54"/>
<use href="#pine" x="353.36" y="221.30"/>
<use href="#pine" x="364.12" y="221.30"/>
<use href="#pine" x="374.88" y="221.30"/>
<use href="#pine" x="385.64" y="221.30"/>
<use href="#pine" x="396.40" y="221.30"/>
<use href="#pine" x="643.93" y="221.30"/>
<use href="#pine" x="654.69" y="221.30"/>
<use href="#pine" x="676.21" y="221.30"/>
<use href="#pine" x="364.12" y="232.06"/>
<use href="#pine" x="374.88" y="232.06"/>
<use href="#pine" x="385.64" y="232.06"/>
<use href="#pine" x="396.40" y="232.06"/>
<use href="#pine" x="407.16" y="232.06"/>
<use href="#pine" x="643.93" y="232.06"/>
<use href="#pine" x="654.69" y="232.06"/>
<use href="#pine" x="665.45" y="232.06"/>
<use href="#pine" x="676.21" y="232.06"/>
<use href="#pine" x="364.12" y="242.82"/>
<use href="#pine" x="374.88" y="242.82"/>
<use href="#pine" x="385.64" y="242.82"/>
<use href="#pine" x="396.40" y="242.82"/>
<use href="#pine" x="407.16" y="242.82"/>
<use href="#pine" x="654.69" y="242.82"/>
<use href="#pine" x="665.45" y="242.82"/>
<use href="#pine" x="374.88" y="253.59"/>
<use href="#pine" x="385.64" y="253.59"/>
<use href="#pine" x="396.40" y="253.59"/>
<use href="#pine" x="654.69" y="371.97"/>
<use href="#pine" x="643.93" y="382.73"/>
<use href="#pine" x="654.69" y="382.73"/>
<use href="#pine" x="665.45" y="382.73"/>
<use href="#pine" x="643.93" y="393.49"/>
<use href="#pine" x="654.69" y="393.49"/>
<use href="#pine" x="385.64" y="404.25"/>
<use href="#pine" x="407.16" y="404.25"/>
<use href="#pine" x="374.88" y="415.01"/>
<use href="#pine" x="385.64" y="415.01"/>
<use href="#pine" x="396.40" y="415.01"/>
<use href="#pine" x="407.16" y="415.01"/>
<use href="#pine" x="417.93" y="415.01"/>
<use href="#pine" x="374.88" y="425.78"/>
<use href="#pine" x="385.64" y="425.78"/>
<use href="#pine" x="396.40" y="425.78"/>
<use href="#pine" x="407.16" y="425.78"/>
<use href="#pine" x="719.26" y="425.78"/>
<use href="#pine" x="730.03" y="425.78"/>
<use href="#pine" x="364.12" y="436.54"/>
<use href="#pine" x="374.88" y="436.54"/>
<use href="#pine" x="385.64" y="436.54"/>
<use href="#pine" x="396.40" y="436.54"/>
<use href="#pine" x="407.16" y="436.54"/>
<use href="#pine" x="525.55" y="436.54"/>
<use href="#pine" x="536.31" y="436.54"/>
<use href="#pine" x="547.07" y="436.54"/>
<use href="#pine" x="708.50" y="436.54"/>
<use href="#pine" x="719.26" y="436.54"/>
<use href="#pine" x="730.03" y="436.54"/>
<use href="#pine" x="374.88" y="447.30"/>
<use href="#pine" x="385.64" y="447.30"/>
<use href="#pine" x="396.40" y="447.30"/>
<use href="#pine" x="407.16" y="447.30"/>
<use href="#pine" x="525.55" y="447.30"/>
<use href="#pine" x="536.31" y="447.30"/>
<use href="#pine" x="547.07" y="447.30"/>
<use href="#pine" x="557.83" y="447.30"/>
<use href="#pine" x="568.60" y="447.30"/>
<use href="#pine" x="697.74" y="447.30"/>
<use href="#pine" x="708.50" y="447.30"/>
<use href="#pine" x="719.26" y="447.30"/>
<use href="#pine" x="730.03" y="447.30"/>
<use href="#pine" x="536.31" y="458.06"/>
<use href="#pine" x="547.07" y="458.06"/>
<use href="#pine" x="568.60" y="458.06"/>
<use href="#pine" x="686.98" y="458.06"/>
<use href="#pine" x="697.74" y="458.06"/>
<use href="#pine" x="708.50" y="458.06"/>
<use href="#pine" x="719.26" y="458.06"/>
<use href="#pine" x="730.03" y="458.06"/>
<use href="#pine" x="536.31" y="468.83"/>
<use href="#pine" x="547.07" y="468.83"/>
<use href="#pine" x="557.83" y="468.83"/>
<use href="#pine" x="568.60" y="468.83"/>
<use href="#pine" x="676.21" y="468.83"/>
<use href="#pine" x="686.98" y="468.83"/>
<use href="#pine" x="697.74" y="468.83"/>
<use href="#pine" x="708.50" y="468.83"/>
<use href="#pine" x="536.31" y="479.59"/>
<use href="#pine" x="547.07" y="479.59"/>
<use href="#pine" x="686.98" y="479.59"/>
<use href="#pine" x="697.74" y="479.59"/>
<use href="#birch" x="471.74" y="210.54"/>
<use href="#birch" x="482.50" y="210.54"/>
<use href="#birch" x="493.26" y="210.54"/>
<use href="#birch" x="460.98" y="221.30"/>
<use href="#birch" x="482.50" y="221.30"/>
<use href="#birch" x="493.26" y="221.30"/>
<use href="#birch" x="450.21" y="232.06"/>
<use href="#birch" x="460.98" y="232.06"/>
<use href="#birch" x="471.74" y="232.06"/>
<use href="#birch" x="482.50" y="232.06"/>
<use href="#birch" x="493.26" y="232.06"/>
<use href="#birch" x="439.45" y="242.82"/>
<use href="#birch" x="450.21" y="242.82"/>
<use href="#birch" x="460.98" y="242.82"/>
<use href="#birch" x="471.74" y="242.82"/>
<use href="#birch" x="482.50" y="242.82"/>
<use href="#birch" x="439.45" y="253.59"/>
<use href="#birch" x="450.21" y="253.59"/>
<use href="#birch" x="460.98" y="253.59"/>
<use href="#birch" x="471.74" y="253.59"/>
<use href="#birch" x="439.45" y="264.35"/>
<use href="#birch" x="450.21" y="264.35"/>
<use href="#birch" x="460.98" y="264.35"/>
<use href="#birch" x="471.74" y="264.35"/>
<use href="#birch" x="428.69" y="275.11"/>
<use href="#birch" x="439.45" y="275.11"/>
<use href="#birch" x="450.21" y="275.11"/>
<use href="#birch" x="460.98" y="275.11"/>
<use href="#birch" x="439.45" y="285.87"/>
<use href="#birch" x="450.21" y="285.87"/>
<use href="#birch" x="460.98" y="285.87"/>
<use href="#birch" x="654.69" y="285.87"/>
<use href="#birch" x="665.45" y="285.87"/>
<use href="#birch" x="643.93" y="296.63"/>
<use href="#birch" x="654.69" y="296.63"/>
<use href="#birch" x="665.45" y="296.63"/>
<use href="#birch" x="633.17" y="307.39"/>
<use href="#birch" x="643.93" y="307.39"/>
<use href="#birch" x="654.69" y="307.39"/>
<use href="#birch" x="665.45" y="307.39"/>
<use href="#birch" x="676.21" y="307.39"/>
<use href="#birch" x="622.40" y="318.16"/>
<use href="#birch" x="633.17" y="318.16"/>
<use href="#birch" x="643.93" y="318.16"/>
<use href="#birch" x="654.69" y="318.16"/>
<use href="#birch" x="665.45" y="318.16"/>
<use href="#birch" x="676.21" y="318.16"/>
<use href="#birch" x="622.40" y="328.92"/>
<use href="#birch" x="633.17" y="328.92"/>
<use href="#birch" x="643.93" y="328.92"/>
<use href="#birch" x="654.69" y="328.92"/>
<use href="#birch" x="665.45" y="328.92"/>
<use href="#birch" x="633.17" y="339.68"/>
<use href="#birch" x="643.93" y="339.68"/>
<use href="#birch" x="654.69" y="339.68"/>
<use href="#birch" x="643.93" y="350.44"/>
<use href="#birch" x="547.07" y="371.97"/>
<use href="#birch" x="557.83" y="371.97"/>
<use href="#birch" x="568.60" y="371.97"/>
<use href="#birch" x="579.36" y="371.97"/>
<use href="#birch" x="590.12" y="371.97"/>
<use href="#birch" x="600.88" y="371.97"/>
<use href="#birch" x="547.07" y="382.73"/>
<use href="#birch" x="557.83" y="382.73"/>
<use href="#birch" x="568.60" y="382.73"/>
<use href="#birch" x="579.36" y="382.73"/>
<use href="#birch" x="590.12" y="382.73"/>
<use href="#birch" x="600.88" y="382.73"/>
<use href="#birch" x="611.64" y="382.73"/>
<use href="#birch" x="547.07" y="393.49"/>
<use href="#birch" x="557.83" y="393.49"/>
<use href="#birch" x="568.60" y="393.49"/>
<use href="#birch" x="579.36" y="393.49"/>
<use href="#birch" x="590.12" y="393.49"/>
<use href="#birch" x="600.88" y="393.49"/>
<use href="#birch" x="611.64" y="393.49"/>
<use href="#birch" x="557.83" y="404.25"/>
<use href="#birch" x="579.36" y="404.25"/>
<use href="#birch" x="590.12" y="404.25"/>
<use href="#birch" x="600.88" y="404.25"/>
<use href="#birch" x="557.83" y="415.01"/>
<use href="#birch" x="568.60" y="415.01"/>
<use href="#birch" x="579.36" y="415.01"/>
<use href="#birch" x="590.12" y="415.01"/>
<use href="#house" x="536.31" y="113.68"/>
<use href="#house" x="493.26" y="135.20"/>
<use href="#house" x="536.31" y="156.73"/>
<use href="#house" x="482.50" y="178.25"/>
<use href="#house" x="697.74" y="199.78"/>
<use href="#house" x="385.64" y="307.39"/>
<use href="#house" x="611.64" y="350.44"/>
<use href="#house" x="719.26" y="328.92"/>
<use href="#house" x="428.69" y="425.78"/>
<use href="#house" x="428.69" y="447.30"/>
<use href="#house" x="417.93" y="479.59"/>
<use href="#house" x="514.78" y="468.83"/>
<use href="#house" x="633.17" y="447.30"/>
<use href="#tent" x="385.64" y="210.94"/>
<use href="#tent" x="471.74" y="221.70"/>
<use href="#tent" x="665.45" y="221.70"/>
<use href="#tent" x="568.60" y="404.65"/>
<use href="#tent" x="697.74" y="436.94"/>
<use href="#people" x="590.12" y="145.97"/>
<use href="#people" x="676.21" y="328.92"/>
<use href="#people" x="482.50" y="447.30"/>
<use href="#people" x="557.83" y="458.06"/>
<use href="#unitb" x="513.38" y="156.73"/>
<use href="#unitb" x="621.00" y="264.35"/>
<use href="#unitb" x="427.29" y="339.68"/>
<use href="#unitb" x="545.67" y="307.39"/>
<use href="#unitb" x="513.38" y="415.01"/>
<use href="#unity" x="524.05" y="285.87"/>
<g font-family='"Liberation Sans", sans-serif' font-size="7.85" fill="#b4b4b4" transform="scale(0.89,1)"><text x="372.84" y="62.20" text-anchor="middle">A</text><text x="372.84" y="518.20" text-anchor="middle">A</text><text x="384.94" y="62.20" text-anchor="middle">B</text><text x="384.94" y="518.20" text-anchor="middle">B</text><text x="397.03" y="62.20" text-anchor="middle">C</text><text x="397.03" y="518.20" text-anchor="middle">C</text><text x="409.12" y="62.20" text-anchor="middle">D</text><text x="409.12" y="518.20" text-anchor="middle">D</text><text x="421.21" y="62.20" text-anchor="middle">E</text><text x="421.21" y="518.20" text-anchor="middle">E</text><text x="433.30" y="62.20" text-anchor="middle">F</text><text x="433.30" y="518.20" text-anchor="middle">F</text><text x="445.40" y="62.20" text-anchor="middle">G</text><text x="445.40" y="518.20" text-anchor="middle">G</text><text x="457.49" y="62.20" text-anchor="middle">H</text><text x="457.49" y="518.20" text-anchor="middle">H</text><text x="469.58" y="62.20" text-anchor="middle">I</text><text x="469.58" y="518.20" text-anchor="middle">I</text><text x="481.67" y="62.20" text-anchor="middle">J</text><text x="481.67" y="518.20" text-anchor="middle">J</text><text x="493.77" y="62.20" text-anchor="middle">K</text><text x="493.77" y="518.20" text-anchor="middle">K</text><text x="505.86" y="62.20" text-anchor="middle">L</text><text x="505.86" y="518.20" text-anchor="middle">L</text><text x="517.95" y="62.20" text-anchor="middle">M</text><text x="517.95" y="518.20" text-anchor="middle">M</text><text x="530.04" y="62.20" text-anchor="middle">N</text><text x="530.04" y="518.20" text-anchor="middle">N</text><text x="542.13" y="62.20" text-anchor="middle">O</text><text x="542.13" y="518.20" text-anchor="middle">O</text><text x="554.23" y="62.20" text-anchor="middle">P</text><text x="554.23" y="518.20" text-anchor="middle">P</text><text x="566.32" y="62.20" text-anchor="middle">Q</text><text x="566.32" y="518.20" text-anchor="middle">Q</text><text x="578.41" y="62.20" text-anchor="middle">R</text><text x="578.41" y="518.20" text-anchor="middle">R</text><text x="590.50" y="62.20" text-anchor="middle">S</text><text x="590.50" y="518.20" text-anchor="middle">S</text><text x="602.59" y="62.20" text-anchor="middle">T</text><text x="602.59" y="518.20" text-anchor="middle">T</text><text x="614.69" y="62.20" text-anchor="middle">U</text><text x="614.69" y="518.20" text-anchor="middle">U</text><text x="626.78" y="62.20" text-anchor="middle">V</text><text x="626.78" y="518.20" text-anchor="middle">V</text><text x="638.87" y="62.20" text-anchor="middle">W</text><text x="638.87" y="518.20" text-anchor="middle">W</text><text x="650.96" y="62.20" text-anchor="middle">X</text><text x="650.96" y="518.20" text-anchor="middle">X</text><text x="663.06" y="62.20" text-anchor="middle">Y</text><text x="663.06" y="518.20" text-anchor="middle">Y</text><text x="675.15" y="62.20" text-anchor="middle">Z</text><text x="675.15" y="518.20" text-anchor="middle">Z</text><text x="687.24" y="54.45" text-anchor="middle">A</text><text x="687.24" y="62.20" text-anchor="middle">A</text><text x="687.24" y="510.10" text-anchor="middle">A</text><text x="687.24" y="518.20" text-anchor="middle">A</text><text x="699.33" y="54.45" text-anchor="middle">A</text><text x="699.33" y="62.20" text-anchor="middle">B</text><text x="699.33" y="510.10" text-anchor="middle">A</text><text x="699.33" y="518.20" text-anchor="middle">B</text><text x="711.42" y="54.45" text-anchor="middle">A</text><text x="711.42" y="62.20" text-anchor="middle">C</text><text x="711.42" y="510.10" text-anchor="middle">A</text><text x="711.42" y="518.20" text-anchor="middle">C</text><text x="723.52" y="54.45" text-anchor="middle">A</text><text x="723.52" y="62.20" text-anchor="middle">D</text><text x="723.52" y="510.10" text-anchor="middle">A</text><text x="723.52" y="518.20" text-anchor="middle">D</text><text x="735.61" y="54.45" text-anchor="middle">A</text><text x="735.61" y="62.20" text-anchor="middle">E</text><text x="735.61" y="510.10" text-anchor="middle">A</text><text x="735.61" y="518.20" text-anchor="middle">E</text><text x="747.70" y="54.45" text-anchor="middle">A</text><text x="747.70" y="62.20" text-anchor="middle">F</text><text x="747.70" y="510.10" text-anchor="middle">A</text><text x="747.70" y="518.20" text-anchor="middle">F</text><text x="759.79" y="54.45" text-anchor="middle">A</text><text x="759.79" y="62.20" text-anchor="middle">G</text><text x="759.79" y="510.10" text-anchor="middle">A</text><text x="759.79" y="518.20" text-anchor="middle">G</text><text x="771.88" y="54.45" text-anchor="middle">A</text><text x="771.88" y="62.20" text-anchor="middle">H</text><text x="771.88" y="510.10" text-anchor="middle">A</text><text x="771.88" y="518.20" text-anchor="middle">H</text><text x="783.98" y="54.45" text-anchor="middle">A</text><text x="783.98" y="62.20" text-anchor="middle">I</text><text x="783.98" y="510.10" text-anchor="middle">A</text><text x="783.98" y="518.20" text-anchor="middle">I</text><text x="796.07" y="54.45" text-anchor="middle">A</text><text x="796.07" y="62.20" text-anchor="middle">J</text><text x="796.07" y="510.10" text-anchor="middle">A</text><text x="796.07" y="518.20" text-anchor="middle">J</text><text x="808.16" y="54.45" text-anchor="middle">A</text><text x="808.16" y="62.20" text-anchor="middle">K</text><text x="808.16" y="510.10" text-anchor="middle">A</text><text x="808.16" y="518.20" text-anchor="middle">K</text><text x="820.25" y="54.45" text-anchor="middle">A</text><text x="820.25" y="62.20" text-anchor="middle">L</text><text x="820.25" y="510.10" text-anchor="middle">A</text><text x="820.25" y="518.20" text-anchor="middle">L</text><text x="832.34" y="54.45" text-anchor="middle">A</text><text x="832.34" y="62.20" text-anchor="middle">M</text><text x="832.34" y="510.10" text-anchor="middle">A</text><text x="832.34" y="518.20" text-anchor="middle">M</text><text x="844.44" y="54.45" text-anchor="middle">A</text><text x="844.44" y="62.20" text-anchor="middle">N</text><text x="844.44" y="510.10" text-anchor="middle">A</text><text x="844.44" y="518.20" text-anchor="middle">N</text><text x="358.20" y="72.33" text-anchor="end">1</text><text x="862.70" y="72.33" text-anchor="end">1</text><text x="358.20" y="83.09" text-anchor="end">2</text><text x="862.70" y="83.09" text-anchor="end">2</text><text x="358.20" y="93.86" text-anchor="end">3</text><text x="862.70" y="93.86" text-anchor="end">3</text><text x="358.20" y="104.62" text-anchor="end">4</text><text x="862.70" y="104.62" text-anchor="end">4</text><text x="358.20" y="115.38" text-anchor="end">5</text><text x="862.70" y="115.38" text-anchor="end">5</text><text x="358.20" y="126.14" text-anchor="end">6</text><text x="862.70" y="126.14" text-anchor="end">6</text><text x="358.20" y="136.90" text-anchor="end">7</text><text x="862.70" y="136.90" text-anchor="end">7</text><text x="358.20" y="147.66" text-anchor="end">8</text><text x="862.70" y="147.66" text-anchor="end">8</text><text x="358.20" y="158.43" text-anchor="end">9</text><text x="862.70" y="158.43" text-anchor="end">9</text><text x="358.20" y="169.19" text-anchor="end">10</text><text x="862.70" y="169.19" text-anchor="end">10</text><text x="358.20" y="179.95" text-anchor="end">11</text><text x="862.70" y="179.95" text-anchor="end">11</text><text x="358.20" y="190.71" text-anchor="end">12</text><text x="862.70" y="190.71" text-anchor="end">12</text><text x="358.20" y="201.47" text-anchor="end">13</text><text x="862.70" y="201.47" text-anchor="end">13</text><text x="358.20" y="212.24" text-anchor="end">14</text><text x="862.70" y="212.24" text-anchor="end">14</text><text x="358.20" y="223.00" text-anchor="end">15</text><text x="862.70" y="223.00" text-anchor="end">15</text><text x="358.20" y="233.76" text-anchor="end">16</text><text x="862.70" y="233.76" text-anchor="end">16</text><text x="358.20" y="244.52" text-anchor="end">17</text><text x="862.70" y="244.52" text-anchor="end">17</text><text x="358.20" y="255.28" text-anchor="end">18</text><text x="862.70" y="255.28" text-anchor="end">18</text><text x="358.20" y="266.05" text-anchor="end">19</text><text x="862.70" y="266.05" text-anchor="end">19</text><text x="358.20" y="276.81" text-anchor="end">20</text><text x="862.70" y="276.81" text-anchor="end">20</text><text x="358.20" y="287.57" text-anchor="end">21</text><text x="862.70" y="287.57" text-anchor="end">21</text><text x="358.20" y="298.33" text-anchor="end">22</text><text x="862.70" y="298.33" text-anchor="end">22</text><text x="358.20" y="309.09" text-anchor="end">23</text><text x="862.70" y="309.09" text-anchor="end">23</text><text x="358.20" y="319.86" text-anchor="end">24</text><text x="862.70" y="319.86" text-anchor="end">24</text><text x="358.20" y="330.62" text-anchor="end">25</text><text x="862.70" y="330.62" text-anchor="end">25</text><text x="358.20" y="341.38" text-anchor="end">26</text><text x="862.70" y="341.38" text-anchor="end">26</text><text x="358.20" y="352.14" text-anchor="end">27</text><text x="862.70" y="352.14" text-anchor="end">27</text><text x="358.20" y="362.91" text-anchor="end">28</text><text x="862.70" y="362.91" text-anchor="end">28</text><text x="358.20" y="373.67" text-anchor="end">29</text><text x="862.70" y="373.67" text-anchor="end">29</text><text x="358.20" y="384.43" text-anchor="end">30</text><text x="862.70" y="384.43" text-anchor="end">30</text><text x="358.20" y="395.19" text-anchor="end">31</text><text x="862.70" y="395.19" text-anchor="end">31</text><text x="358.20" y="405.95" text-anchor="end">32</text><text x="862.70" y="405.95" text-anchor="end">32</text><text x="358.20" y="416.71" text-anchor="end">33</text><text x="862.70" y="416.71" text-anchor="end">33</text><text x="358.20" y="427.48" text-anchor="end">34</text><text x="862.70" y="427.48" text-anchor="end">34</text><text x="358.20" y="438.24" text-anchor="end">35</text><text x="862.70" y="438.24" text-anchor="end">35</text><text x="358.20" y="449.00" text-anchor="end">36</text><text x="862.70" y="449.00" text-anchor="end">36</text><text x="358.20" y="459.76" text-anchor="end">37</text><text x="862.70" y="459.76" text-anchor="end">37</text><text x="358.20" y="470.53" text-anchor="end">38</text><text x="862.70" y="470.53" text-anchor="end">38</text><text x="358.20" y="481.29" text-anchor="end">39</text><text x="862.70" y="481.29" text-anchor="end">39</text><text x="358.20" y="492.05" text-anchor="end">40</text><text x="862.70" y="492.05" text-anchor="end">40</text></g>
</svg>
<!-- status bar -->
<div class="abs" style="left:2px;top:552px;width:797px;height:1px;background:#76787a"></div>
<div class="abs" style="left:2px;top:552px;width:1px;height:11px;background:#6a7078"></div>
<div class="abs" style="left:2px;top:563px;width:797px;height:1px;background:#6a7a8c"></div>
</body></html>
